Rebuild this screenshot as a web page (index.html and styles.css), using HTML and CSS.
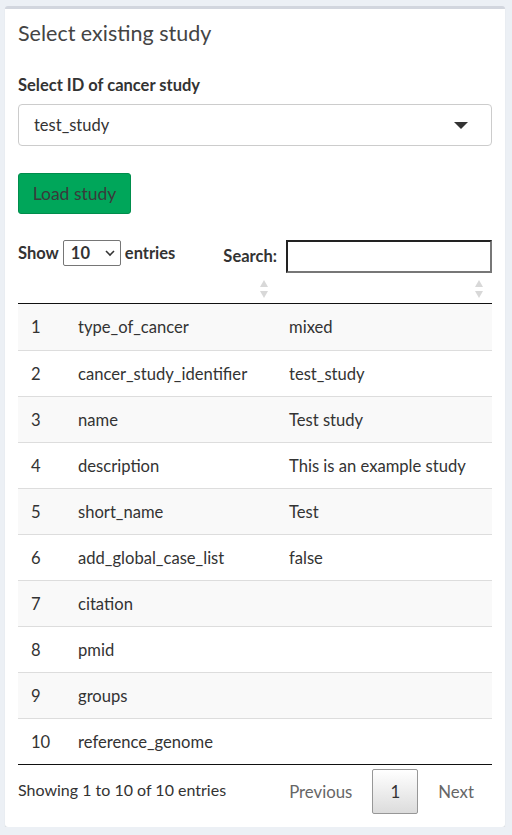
FILE: index.html
```html
<!DOCTYPE html>
<html>
<head>
<meta charset="utf-8">
<link rel="stylesheet" href="styles.css">
</head>
<body>
<div class="box">
  <h3 class="box-title">Select existing study</h3>
  <label class="field-label">Select ID of cancer study</label>
  <div class="select">
    <span>test_study</span>
    <span class="caret"></span>
  </div>
  <button class="btn-load">Load study</button>
  <div class="dt-top">
    <div class="dt-length">
      <b>Show</b>
      <span class="len-select"><b>10</b>
        <svg width="12" height="8" viewBox="0 0 12 8"><path d="M2 2 L6 6 L10 2" fill="none" stroke="#333" stroke-width="1.6"/></svg>
      </span>
      <b>entries</b>
    </div>
    <div class="dt-search">
      <b>Search:</b>
      <span class="search-input"></span>
    </div>
  </div>
  <table class="dt">
    <thead>
      <tr>
        <th class="c1"></th>
        <th class="c2"><span class="sort"></span></th>
        <th class="c3"><span class="sort"></span></th>
      </tr>
    </thead>
    <tbody>
      <tr class="odd"><td class="c1">1</td><td class="c2">type_of_cancer</td><td class="c3">mixed</td></tr>
      <tr><td class="c1">2</td><td class="c2">cancer_study_identifier</td><td class="c3">test_study</td></tr>
      <tr class="odd"><td class="c1">3</td><td class="c2">name</td><td class="c3">Test study</td></tr>
      <tr><td class="c1">4</td><td class="c2">description</td><td class="c3">This is an example study</td></tr>
      <tr class="odd"><td class="c1">5</td><td class="c2">short_name</td><td class="c3">Test</td></tr>
      <tr><td class="c1">6</td><td class="c2">add_global_case_list</td><td class="c3">false</td></tr>
      <tr class="odd"><td class="c1">7</td><td class="c2">citation</td><td class="c3"></td></tr>
      <tr><td class="c1">8</td><td class="c2">pmid</td><td class="c3"></td></tr>
      <tr class="odd"><td class="c1">9</td><td class="c2">groups</td><td class="c3"></td></tr>
      <tr><td class="c1">10</td><td class="c2">reference_genome</td><td class="c3"></td></tr>
    </tbody>
  </table>
  <div class="dt-bottom">
    <div class="info">Showing 1 to 10 of 10 entries</div>
    <div class="paging">
      <span class="pg">Previous</span>
      <span class="pg current">1</span>
      <span class="pg">Next</span>
    </div>
  </div>
</div>
</body>
</html>
```

FILE: styles.css
```css
html, body {
  margin: 0;
  padding: 0;
  background: #ecf0f5;
  font-family: "Lato", "Liberation Sans", sans-serif;
  color: #333;
}
.box {
  margin: 6px 7px 0 5px;
  background: #fff;
  border-top: 3px solid #d2d6de;
  border-radius: 3px;
  box-shadow: 0 1px 1px rgba(0,0,0,0.12);
  padding: 0 13px 13px 13px;
  height: 821px;
  box-sizing: border-box;
}
.box-title {
  margin: 0;
  padding-top: 11px;
  font-size: 21.5px;
  line-height: 26px;
  font-weight: normal;
  color: #444;
}
.field-label {
  display: block;
  margin-top: 29px;
  font-weight: bold;
  font-size: 16.5px;
  line-height: 20px;
  color: #333;
}
.select {
  margin-top: 9px;
  height: 42px;
  box-sizing: border-box;
  border: 1px solid #ccc;
  border-radius: 4px;
  display: flex;
  align-items: center;
  justify-content: space-between;
  padding: 0 23px 0 15px;
  font-size: 16.5px;
  color: #333;
}
.caret {
  width: 0;
  height: 0;
  border-left: 7px solid transparent;
  border-right: 7px solid transparent;
  border-top: 7px solid #333;
}
.btn-load {
  display: block;
  margin-top: 27px;
  height: 41px;
  width: 113px;
  background: #00a65a;
  border: 1px solid #008d4c;
  border-radius: 3px;
  color: #3a3a3a;
  font-family: inherit;
  font-size: 17.5px;
  padding: 0;
}
.dt-top {
  margin-top: 26px;
  display: flex;
  justify-content: space-between;
  align-items: flex-start;
  font-size: 16.5px;
}
.dt-length {
  display: flex;
  align-items: center;
  gap: 4px;
  height: 26px;
}
.len-select {
  display: inline-flex;
  align-items: center;
  justify-content: space-between;
  width: 58px;
  height: 26px;
  box-sizing: border-box;
  border: 1px solid #767676;
  border-radius: 2px;
  padding: 0 4px 0 7px;
}
.dt-search {
  display: flex;
  align-items: center;
  gap: 9px;
}
.dt-search b {
  padding-bottom: 1px;
}
.search-input {
  display: block;
  width: 206px;
  height: 33px;
  box-sizing: border-box;
  border: 2px solid #222;
  border-right-color: #777;
  border-bottom-color: #777;
}
.dt {
  width: 100%;
  border-collapse: collapse;
  margin-top: 1px;
  font-size: 16.6px;
  color: #333;
}
.dt th {
  height: 29px;
  border-bottom: 1px solid #111;
  padding: 0;
  position: relative;
}
.dt td {
  height: 45px;
  padding: 0;
  border-top: 1px solid #ddd;
  vertical-align: middle;
}
.dt tbody tr:first-child td { border-top: none; height: 46px; }
.dt tbody tr:last-child td { border-bottom: 1px solid #111; }
.dt tr.odd td { background: #f9f9f9; }
.dt .c1 { width: 35px; padding-left: 13px; }
.dt .c2 { width: 199px; padding-left: 12px; }
.dt .c3 { padding-left: 12px; }
.sort {
  position: absolute;
  right: 8px;
  top: 6px;
  width: 10px;
  height: 18px;
}
.sort::before, .sort::after {
  content: "";
  position: absolute;
  left: 1px;
  border-left: 4px solid transparent;
  border-right: 4px solid transparent;
}
.sort::before {
  top: 0;
  border-bottom: 7px solid #d8d8d8;
}
.sort::after {
  bottom: 0;
  border-top: 7px solid #d8d8d8;
}
.dt-bottom {
  display: flex;
  justify-content: space-between;
  align-items: center;
  margin-top: 4px;
  font-size: 16px;
}
.info { color: #333; margin-bottom: 5px; }
.paging {
  display: flex;
  align-items: center;
  margin-right: 0;
  font-size: 16.8px;
}
.pg {
  color: #666;
  padding: 0 20px;
  line-height: 45px;
}
.pg:last-child { padding-right: 18px; }
.pg.current {
  color: #333;
  width: 46px;
  height: 45px;
  box-sizing: border-box;
  padding: 0;
  text-align: center;
  line-height: 43px;
  border: 1px solid #979797;
  border-radius: 2px;
  background: linear-gradient(to bottom, #fff 0%, #dcdcdc 100%);
}
```
